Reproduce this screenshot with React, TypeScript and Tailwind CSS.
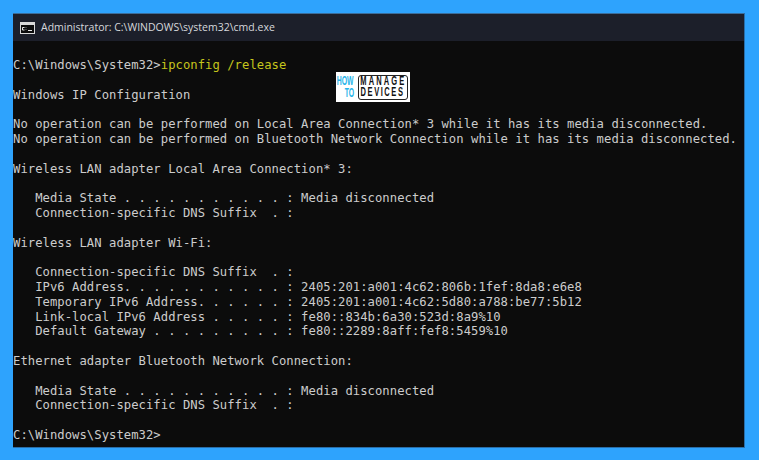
const lines = [
  "Windows IP Configuration",
  "",
  "No operation can be performed on Local Area Connection* 3 while it has its media disconnected.",
  "No operation can be performed on Bluetooth Network Connection while it has its media disconnected.",
  "",
  "Wireless LAN adapter Local Area Connection* 3:",
  "",
  "   Media State . . . . . . . . . . . : Media disconnected",
  "   Connection-specific DNS Suffix  . :",
  "",
  "Wireless LAN adapter Wi-Fi:",
  "",
  "   Connection-specific DNS Suffix  . :",
  "   IPv6 Address. . . . . . . . . . . : 2405:201:a001:4c62:806b:1fef:8da8:e6e8",
  "   Temporary IPv6 Address. . . . . . : 2405:201:a001:4c62:5d80:a788:be77:5b12",
  "   Link-local IPv6 Address . . . . . : fe80::834b:6a30:523d:8a9%10",
  "   Default Gateway . . . . . . . . . : fe80::2289:8aff:fef8:5459%10",
  "",
  "Ethernet adapter Bluetooth Network Connection:",
  "",
  "   Media State . . . . . . . . . . . : Media disconnected",
  "   Connection-specific DNS Suffix  . :",
  "",
  "C:\\Windows\\System32>",
];

export default function App() {
  return (
    <div className="w-[759px] h-[460px] bg-[#2ea3fd] pt-[13px] pl-[13px] overflow-hidden">
      <div className="relative w-[732px] h-[435px] bg-[#0c0c0c] border border-[#2a6ea8] border-l-0 border-t-0 flex flex-col">
        <div className="h-[28px] bg-[#1c1f2a] flex items-center pl-[7px] gap-[6px] shrink-0 border-t border-[#3b6d9a]">
          <svg width="15" height="12" viewBox="0 0 15 12">
            <rect x="0.5" y="0.5" width="14" height="11" fill="#0c0c0c" stroke="#d8d8d8" />
            <rect x="1" y="1" width="13" height="2" fill="#d8d8d8" />
            <path d="M2.5 5.5 H4.5 M2.5 8 H4.5 M2.5 5.5 V8 M6 5.5 V6 M6 7.5 V8" fill="none" stroke="#e8e8e8" strokeWidth="1" />
            <path d="M8 8.5 H12" stroke="#e8e8e8" strokeWidth="1" />
          </svg>
          <span className="text-[10.5px] text-[#d6d8dc] font-['Open_Sans',sans-serif]">
            Administrator: C:\WINDOWS\system32\cmd.exe
          </span>
        </div>
        <pre className="pt-[17px] font-['DejaVu_Sans_Mono',monospace] text-[12.2px] tracking-[0.05px] leading-[14.8px] text-[#cccccc] m-0">
          <div>
            C:\Windows\System32&gt;<span className="text-[#c5c51c]">ipconfig /release</span>
          </div>
          <div>{" "}</div>
          {lines.map((l, i) => (
            <div key={i}>{l || " "}</div>
          ))}
        </pre>
        <div className="absolute left-[323px] top-[59px] w-[74px] h-[30px] bg-white flex items-center pl-[2px] gap-[4px]">
          <div className="w-[16px] flex flex-col items-end leading-[12px] text-[#27b4ea] text-[12.5px] font-bold font-['Liberation_Sans',sans-serif]">
            <span className="whitespace-nowrap origin-right scale-x-[.55]">HOW</span>
            <span className="whitespace-nowrap origin-right scale-x-[.55]">TO</span>
          </div>
          <div className="w-[50px] h-[25px] border-[1.5px] border-[#222] rounded-[3px] flex flex-col items-center justify-center text-[#111] text-[12.5px] font-bold leading-[11.5px] font-['Liberation_Sans',sans-serif]">
            <span className="whitespace-nowrap scale-x-[.6] tracking-[3.5px]">MANAGE</span>
            <span className="whitespace-nowrap scale-x-[.6] tracking-[2.6px]">DEVICES</span>
          </div>
        </div>
      </div>
    </div>
  );
}
